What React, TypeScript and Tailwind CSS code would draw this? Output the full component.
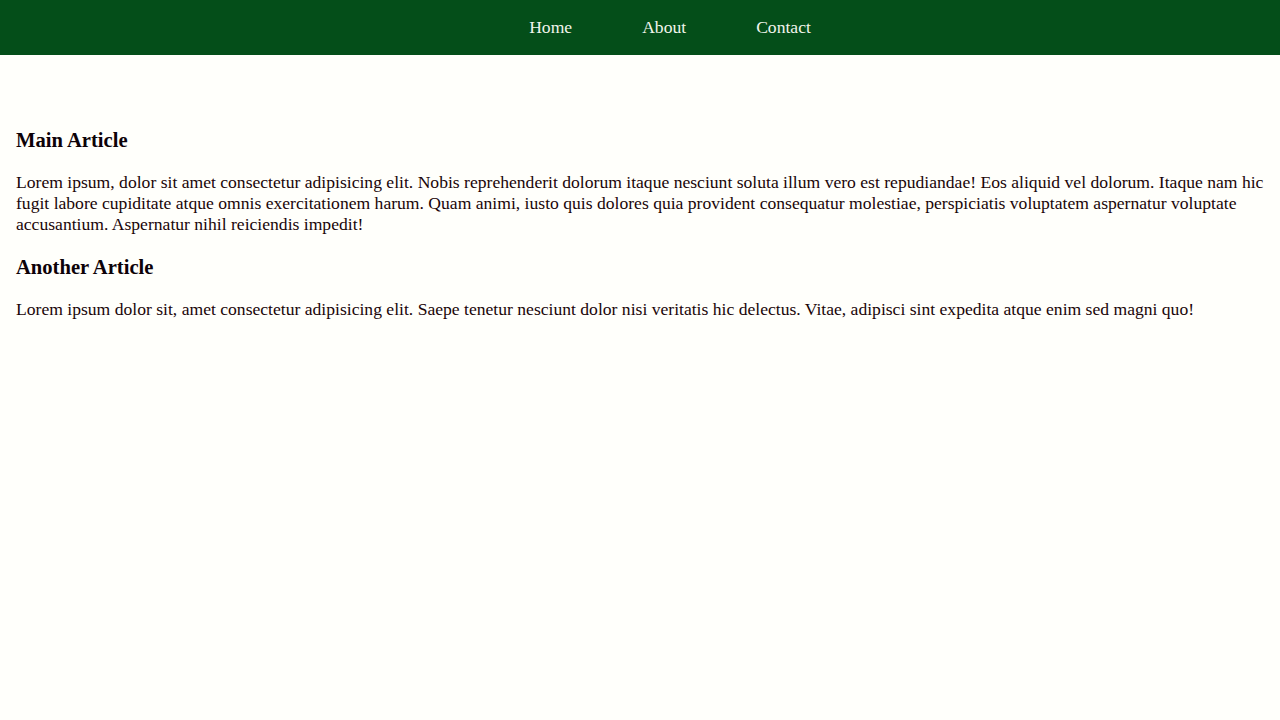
import React from 'react';

const links = ['Home', 'About', 'Contact'];

const articles = [
  {
    title: 'Main Article',
    body: 'Lorem ipsum, dolor sit amet consectetur adipisicing elit. Nobis reprehenderit dolorum itaque nesciunt soluta illum vero est repudiandae! Eos aliquid vel dolorum. Itaque nam hic fugit labore cupiditate atque omnis exercitationem harum. Quam animi, iusto quis dolores quia provident consequatur molestiae, perspiciatis voluptatem aspernatur voluptate accusantium. Aspernatur nihil reiciendis impedit!',
  },
  {
    title: 'Another Article',
    body: 'Lorem ipsum dolor sit, amet consectetur adipisicing elit. Saepe tenetur nesciunt dolor nisi veritatis hic delectus. Vitae, adipisci sint expedita atque enim sed magni quo!',
  },
];

export default function App() {
  return (
    <div className="min-h-screen bg-[#fffffb] font-['Liberation_Serif',serif] text-[17.6px] text-[#1a0508]">
      {/* Top nav */}
      <nav className="h-[55px] bg-[#044e19] flex items-center justify-center">
        <ul className="flex items-center gap-[70px] pl-[60px]">
          {links.map((l) => (
            <li key={l}>
              <a href="#" className="text-[#f2f5ec]">{l}</a>
            </li>
          ))}
        </ul>
      </nav>

      {/* Articles */}
      <main className="px-4 pt-[53px]">
        {articles.map((a) => (
          <article key={a.title}>
            <h3 className="text-[20.6px] font-bold leading-[24px] my-5 text-[#0d0208]">{a.title}</h3>
            <p className="leading-[21px] my-5">{a.body}</p>
          </article>
        ))}
      </main>
    </div>
  );
}
